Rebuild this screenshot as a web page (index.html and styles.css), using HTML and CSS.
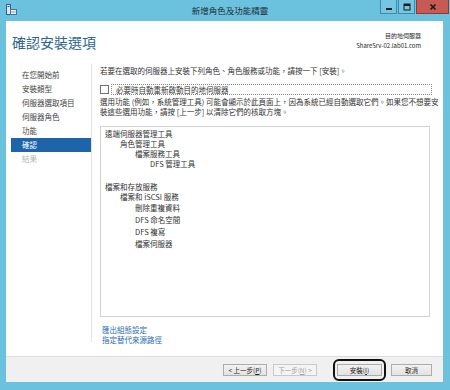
FILE: index.html
```html
<!DOCTYPE html>
<html lang="zh-Hant">
<head>
  <meta charset="UTF-8">
  <title>新增角色及功能精靈</title>
  <link rel="stylesheet" href="styles.css">
</head>
<body>
  <div class="window">
    <div class="titlebar">
      <div class="app-icon">
        <svg width="11" height="11" viewBox="0 0 11 11">
          <rect x="0.5" y="0.5" width="4" height="10" fill="#dfeaf5" stroke="#2a5f9e"/>
          <rect x="1.5" y="2" width="2" height="1" fill="#2a5f9e"/>
          <rect x="4.5" y="5.5" width="6" height="5" fill="#eef3f8" stroke="#4d6f90"/>
          <rect x="5.5" y="7.5" width="4" height="1" fill="#7f9ab4"/>
        </svg>
      </div>
      <div class="title">新增角色及功能精靈</div>
      <div class="controls">
        <span class="ctl">
          <svg width="8" height="8" viewBox="0 0 8 8"><rect x="1" y="5" width="6" height="2" fill="#1b1b1b"/></svg>
        </span>
        <span class="ctl">
          <svg width="8" height="8" viewBox="0 0 8 8"><rect x="1" y="1" width="6" height="6" fill="none" stroke="#1b1b1b" stroke-width="1"/><rect x="1" y="1" width="6" height="2" fill="#1b1b1b"/></svg>
        </span>
        <span class="ctl ctl-close">
          <svg width="8" height="8" viewBox="0 0 8 8"><path d="M1.5 1.5 L6.5 6.5 M6.5 1.5 L1.5 6.5" stroke="#1b1b1b" stroke-width="1.6"/></svg>
        </span>
      </div>
    </div>

    <div class="client">
      <div class="header">
        <h1 class="page-title">確認安裝選項</h1>
        <div class="dest">
          <div>目的地伺服器</div>
          <div>ShareSrv-02.lab01.com</div>
        </div>
      </div>

      <div class="main">
        <ul class="steps">
          <li>在您開始前</li>
          <li>安裝類型</li>
          <li>伺服器選取項目</li>
          <li>伺服器角色</li>
          <li>功能</li>
          <li class="active">確認</li>
          <li class="disabled">結果</li>
        </ul>

        <div class="content">
          <p class="intro">若要在選取的伺服器上安裝下列角色、角色服務或功能，請按一下 [安裝]。</p>
          <div class="check-row">
            <span class="checkbox"></span>
            <span class="check-label">必要時自動重新啟動目的地伺服器</span>
          </div>
          <p class="note">選用功能 (例如，系統管理工具) 可能會顯示於此頁面上，因為系統已經自動選取它們。如果您不想要安<br>裝這些選用功能，請按 [上一步] 以清除它們的核取方塊。</p>

          <div class="list-box">
            <div class="item lvl0">遠端伺服器管理工具</div>
            <div class="item lvl1">角色管理工具</div>
            <div class="item lvl2">檔案服務工具</div>
            <div class="item lvl3">DFS 管理工具</div>

            <div class="item lvl0 group">檔案和存放服務</div>
            <div class="item lvl1">檔案和 iSCSI 服務</div>
            <div class="item lvl2 tall">刪除重複資料</div>
            <div class="item lvl2 tall">DFS 命名空間</div>
            <div class="item lvl2 tall">DFS 複寫</div>
            <div class="item lvl2 tall">檔案伺服器</div>
          </div>

          <div class="links">
            <a href="#">匯出組態設定</a>
            <a href="#">指定替代來源路徑</a>
          </div>
        </div>
      </div>

      <div class="footer">
        <button class="btn">&lt; 上一步(<u>P</u>)</button>
        <button class="btn" disabled>下一步(<u>N</u>) &gt;</button>
        <span class="ring"><button class="btn btn-install">安裝(<u>I</u>)</button></span>
        <button class="btn btn-cancel">取消</button>
      </div>
    </div>
  </div>
</body>
</html>
```

FILE: styles.css
```css
html, body {
  margin: 0;
  padding: 0;
  width: 450px;
  height: 390px;
  overflow: hidden;
  background: #6bc2df;
}
body {
  font-family: "Noto Sans CJK TC", "Noto Sans", sans-serif;
  color: #333;
}
.window {
  height: 390px;
  display: flex;
  flex-direction: column;
}
.titlebar {
  height: 21px;
  display: grid;
  grid-template-columns: 1fr auto 1fr;
  flex-shrink: 0;
}
.app-icon {
  justify-self: start;
  padding: 4px 0 0 6px;
}
.app-icon svg {
  display: block;
}
.title {
  font-size: 8.5px;
  line-height: 21px;
  color: #1f2a33;
  margin-left: 10px;
}
.controls {
  justify-self: end;
  align-self: start;
  display: flex;
  gap: 1px;
  margin-right: 1px;
}
.ctl {
  width: 15px;
  height: 13px;
  border: 1px solid #3d8aab;
  border-top: none;
  background: #74c6e2;
  display: flex;
  align-items: center;
  justify-content: center;
}
.ctl-close {
  width: 31px;
  background: #c75a52;
  border-color: #8f3a35;
}
.client {
  flex: 1;
  margin: 0 7px 8px 6px;
  background: #fff;
  display: flex;
  flex-direction: column;
  min-height: 0;
}
.header {
  height: 43px;
  flex-shrink: 0;
  display: flex;
  justify-content: space-between;
  align-items: flex-start;
  padding: 0 22px 0 6px;
}
.page-title {
  margin: 14px 0 0;
  font-size: 14px;
  line-height: 14px;
  font-weight: normal;
  color: #2e6591;
}
.dest {
  margin-top: 10px;
  font-size: 6px;
  line-height: 10px;
  text-align: right;
  color: #222;
}
.main {
  flex: 1;
  display: flex;
  min-height: 0;
}
.steps {
  flex-shrink: 0;
  list-style: none;
  margin: 0 0 14px;
  padding: 4px 0 0 5px;
  width: 80px;
  border-right: 1px solid #e2e2e2;
  font-size: 7.5px;
  line-height: 14px;
  color: #444;
}
.steps li {
  padding-left: 11px;
}
.steps li.active {
  background: #1e64aa;
  color: #fff;
}
.steps li.disabled {
  color: #b5b5b5;
}
.content {
  flex: 1;
  min-width: 0;
  padding: 2px 13px 0 8px;
  font-size: 7.5px;
  line-height: 10px;
  color: #333;
}
.intro {
  margin: 0;
}
.check-row {
  margin-top: 8px;
  display: flex;
  align-items: center;
  height: 11px;
  margin-right: -2px;
}
.checkbox {
  width: 7px;
  height: 7px;
  border: 1px solid #707070;
  flex-shrink: 0;
}
.check-label {
  flex: 1;
  margin-left: 2px;
  padding-left: 4px;
  border: 1px dotted #888;
  line-height: 9px;
}
.note {
  margin: 2px 0 0;
  white-space: nowrap;
}
.list-box {
  margin-top: 9px;
  height: 187px;
  border: 1px solid #d2d2d2;
  padding: 2px 4px 0;
}
.item {
  line-height: 10px;
}
.item.group {
  margin-top: 13px;
}
.item.tall {
  line-height: 12px;
}
.lvl1 { padding-left: 15px; }
.lvl2 { padding-left: 30px; }
.lvl3 { padding-left: 45px; }
.links {
  margin-top: 8px;
  padding-left: 2px;
  display: flex;
  flex-direction: column;
}
.links a {
  color: #2b6cb0;
  text-decoration: none;
}
.footer {
  height: 25px;
  flex-shrink: 0;
  background: #f0f0f0;
  border-top: 1px solid #dcdcdc;
  display: flex;
  align-items: center;
  justify-content: flex-end;
  padding-right: 11px;
}
.btn {
  width: 44px;
  height: 12px;
  padding: 0;
  margin: 0;
  border: 1px solid #acacac;
  background: linear-gradient(#f2f2f2, #e3e3e3);
  font-family: inherit;
  font-size: 6.5px;
  line-height: 10px;
  color: #222;
}
.btn + .btn {
  margin-left: 6px;
}
.btn:disabled {
  color: #a3a3a3;
  border-color: #c9c9c9;
  background: #f4f4f4;
}
.ring {
  margin: 0 5px 0 16px;
  padding: 3px 2px;
  border: 2px solid #111;
  border-radius: 6px;
  display: flex;
}
.btn-install {
  width: 45px;
}
.btn-cancel {
  width: 41px;
}
```
